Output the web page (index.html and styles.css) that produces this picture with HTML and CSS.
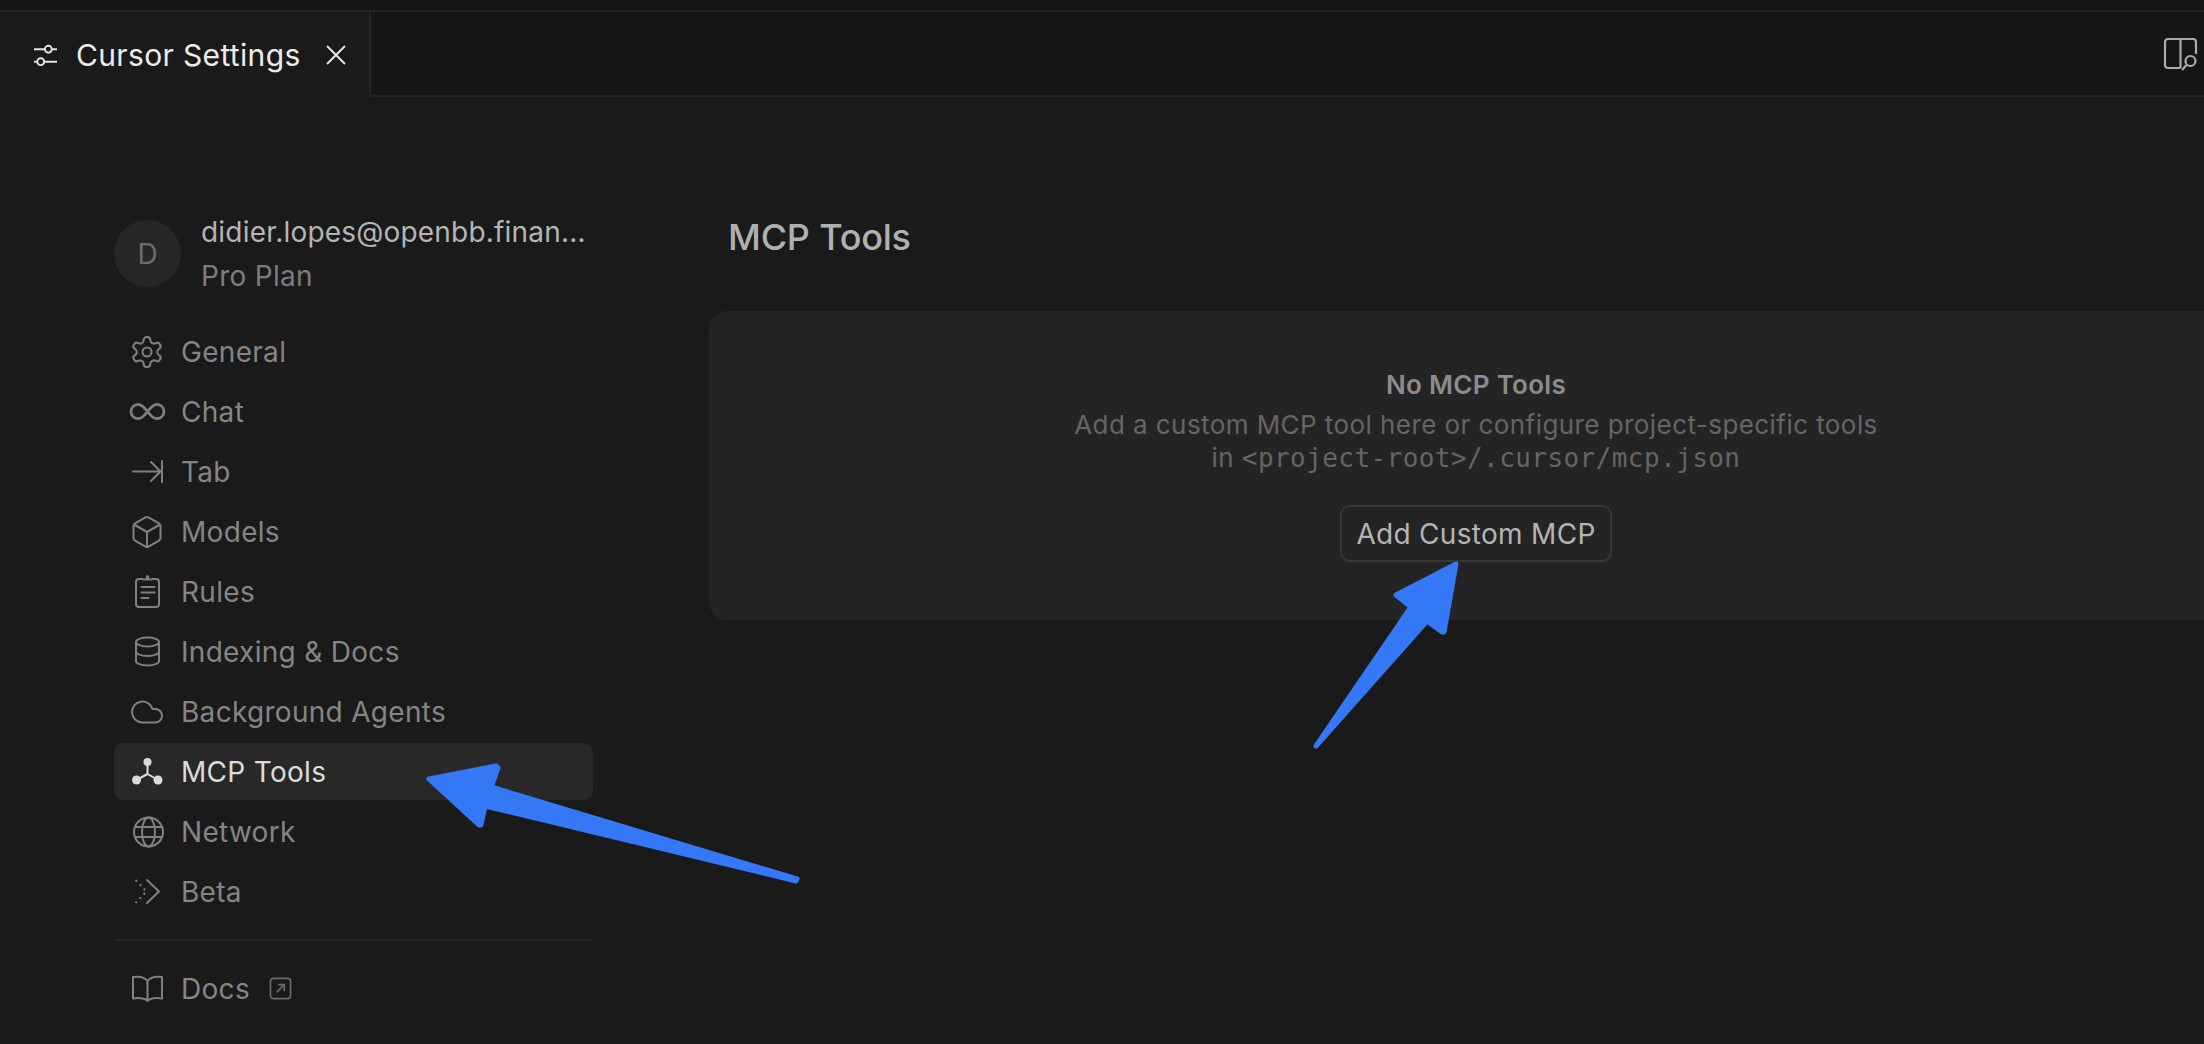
FILE: index.html
```html
<!DOCTYPE html>
<html lang="en">
<head>
<meta charset="utf-8">
<title>Cursor Settings</title>
<link rel="stylesheet" href="styles.css">
</head>
<body>
<div class="app">
  <div class="titlestrip"></div>
  <header class="tabbar">
    <div class="tab">
      <svg class="tab-icon" viewBox="0 0 24 24" width="24" height="24"><path d="M0 6h11M19 6h5M0 19h3M11 19h13"/><circle cx="15" cy="6" r="3.6"/><circle cx="7" cy="19" r="3.6"/></svg>
      <span class="tab-label">Cursor Settings</span>
      <svg class="tab-close" viewBox="0 0 20 20" width="20" height="20"><path d="M1 1l18 18M19 1L1 19"/></svg>
    </div>
    <div class="tab-rest">
      <svg class="layout-icon" viewBox="0 0 32 32" width="32" height="32"><path d="M16.500 30H4a3 3 0 0 1-3-3V4a3 3 0 0 1 3-3h25a3 3 0 0 1 3 3v12M16.500 1v29"/><circle cx="26.500" cy="23" r="5"/><path d="M22.500 27l-4.500 5"/></svg>
    </div>
  </header>
  <div class="body">
    <aside class="sidebar">
      <div class="account">
        <div class="avatar">D</div>
        <div class="account-text">
          <div class="email">didier.lopes@openbb.finan...</div>
          <div class="plan">Pro Plan</div>
        </div>
      </div>
      <nav class="nav">
        <a class="nav-item"><svg class="nav-icon" viewBox="0 0 24 24"><path d="M12.220 2h-.44a2 2 0 0 0-2 2v.18a2 2 0 0 1-1 1.730l-.43.25a2 2 0 0 1-2 0l-.15-.08a2 2 0 0 0-2.730.73l-.22.38a2 2 0 0 0 .73 2.730l.15.1a2 2 0 0 1 1 1.720v.51a2 2 0 0 1-1 1.740l-.15.09a2 2 0 0 0-.73 2.730l.22.38a2 2 0 0 0 2.730.73l.15-.08a2 2 0 0 1 2 0l.43.25a2 2 0 0 1 1 1.730V20a2 2 0 0 0 2 2h.44a2 2 0 0 0 2-2v-.18a2 2 0 0 1 1-1.730l.43-.25a2 2 0 0 1 2 0l.15.08a2 2 0 0 0 2.730-.73l.22-.39a2 2 0 0 0-.73-2.730l-.15-.08a2 2 0 0 1-1-1.740v-.5a2 2 0 0 1 1-1.740l.15-.09a2 2 0 0 0 .73-2.730l-.22-.38a2 2 0 0 0-2.730-.73l-.15.08a2 2 0 0 1-2 0l-.43-.25a2 2 0 0 1-1-1.730V4a2 2 0 0 0-2-2z"/><circle cx="12" cy="12" r="3"/></svg><span>General</span></a>
        <a class="nav-item"><svg class="nav-icon" viewBox="0 0 36 36"><path class="thick" d="M18.500 17.500c-3-4-5.800-7.200-9.300-7.200a7.200 7.200 0 0 0 0 14.400c3.500 0 6.300-3.200 9.300-7.200Zm0 0c3 4 5.800 7.200 9.300 7.200a7.200 7.200 0 0 0 0-14.400c-3.500 0-6.300 3.200-9.300 7.200Z"/></svg><span>Chat</span></a>
        <a class="nav-item"><svg class="nav-icon" viewBox="0 0 36 36"><path class="px" d="M4 17.500H31M22 8l9.500 9.500L22 27M33 7v21"/></svg><span>Tab</span></a>
        <a class="nav-item"><svg class="nav-icon" viewBox="0 0 24 24"><path d="M21 8a2 2 0 0 0-1-1.730l-7-4a2 2 0 0 0-2 0l-7 4A2 2 0 0 0 3 8v8a2 2 0 0 0 1 1.730l7 4a2 2 0 0 0 2 0l7-4A2 2 0 0 0 21 16ZM3.300 7l8.700 5 8.700-5M12 22V12"/></svg><span>Models</span></a>
        <a class="nav-item"><svg class="nav-icon" viewBox="0 0 36 36"><path class="px" d="M14 5h-4a3 3 0 0 0-3 3v22a3 3 0 0 0 3 3h17a3 3 0 0 0 3-3V8a3 3 0 0 0-3-3h-4M12.500 13h13M12.500 18.500h13M12.500 24h7"/><path class="dome" d="M14 6.500c0-1.500 1-2 2.500-2C17 2 17.500 1 18.500 1s1.500 1 2 3.500c1.500 0 3 .5 3 2z"/></svg><span>Rules</span></a>
        <a class="nav-item"><svg class="nav-icon" viewBox="0 0 36 36"><ellipse class="px" cx="18.500" cy="8" rx="11.500" ry="4.500"/><path class="px" d="M7 8v19c0 2.500 5 4.500 11.500 4.500S30 29.500 30 27V8M7 17.500c0 2.500 5 4.500 11.500 4.500S30 20 30 17.500"/></svg><span>Indexing &amp; Docs</span></a>
        <a class="nav-item"><svg class="nav-icon" viewBox="0 0 24 24"><path d="M17.500 19H9a7 7 0 1 1 6.710-9h1.790a4.500 4.500 0 1 1 0 9Z"/></svg><span>Background Agents</span></a>
        <a class="nav-item active"><svg class="nav-icon" viewBox="0 0 36 36"><path class="px" d="M18.500 8v12L7.500 26M18.500 20l10.500 6"/><circle class="node" cx="18.500" cy="8" r="4"/><circle class="node" cx="7.500" cy="26" r="4.500"/><circle class="node" cx="29" cy="26" r="4.500"/></svg><span>MCP Tools</span></a>
        <a class="nav-item"><svg class="nav-icon" viewBox="0 0 36 36"><circle class="px" cx="19.500" cy="18" r="14.500"/><ellipse class="px" cx="19.500" cy="18" rx="6.500" ry="14.500"/><path class="px" d="M6 13h27M6 23h27"/></svg><span>Network</span></a>
        <a class="nav-item"><svg class="nav-icon" viewBox="0 0 36 36"><path class="dots" d="M6.500 6l11 11.500L6.500 29"/><path class="px" d="M18 6l12 11.500L18 29"/></svg><span>Beta</span></a>
      </nav>
      <div class="separator"></div>
      <a class="nav-item docs"><svg class="nav-icon" viewBox="0 0 36 36"><path class="px" d="M18.500 10v20M18.500 10C16 6.500 11 5 4 6v21.500C11 26.500 16 27.500 18.500 30 21 27.500 26 26.500 33 27.500V6c-7-1-12 .5-14.500 4Z"/></svg><span>Docs</span><svg class="ext-icon" viewBox="0 0 24 24" width="23" height="23"><rect x="1.500" y="1.500" width="21" height="21" rx="3"/><path d="M8 16l8-8M9.500 8H16v6.500"/></svg></a>
    </aside>
    <main class="main">
      <h1 class="title">MCP Tools</h1>
      <section class="card">
        <div class="card-title">No MCP Tools</div>
        <p class="card-desc">Add a custom MCP tool here or configure project-specific tools<br>in <code class="path">&lt;project-root&gt;/.cursor/mcp.json</code></p>
        <button class="add-btn">Add Custom MCP</button>
      </section>
    </main>
    <svg class="arrows" viewBox="0 0 2204 947" width="2204" height="947">
      <g transform="translate(0 -97)">
        <polygon points="429,779 496,766 498,768 491,787 797,879 796,881 485,806 481,825 479,825"/>
        <polygon points="1456,564 1396,595 1411,607 1316,746 1427,621 1442,632 1444,632"/>
      </g>
    </svg>
  </div>
</div>
</body>
</html>
```
FILE: styles.css
```css
* { box-sizing: border-box; }
html, body { margin: 0; height: 100%; overflow: hidden; }
body { background: #1a1a1a; font-family: Inter, "Liberation Sans", sans-serif; color: #808080; }

.app { height: 1044px; display: flex; flex-direction: column; overflow: hidden; }

.titlestrip { height: 12px; background: #151515; border-bottom: 2px solid #232323; flex: none; }

.tabbar { height: 85px; display: flex; flex: none; }
.tab { width: 371px; display: flex; align-items: center; background: #1a1a1a; border-right: 2px solid #242424; padding-left: 34px; }
.tab-icon { flex: none; width: 23px; height: 24px; fill: none; stroke: #e6e6e6; stroke-width: 2; }
.tab-label { margin-left: 19px; font-size: 30px; letter-spacing: .35px; color: #ececec; white-space: nowrap; }
.tab-close { flex: none; margin-left: 25px; fill: none; stroke: #e6e6e6; stroke-width: 2; }
.tab-rest { flex: 1; background: #151515; border-bottom: 2px solid #242424; display: flex; justify-content: flex-end; align-items: flex-start; padding: 26px 8px 0 0; }
.layout-icon { fill: none; stroke: #ababab; stroke-width: 2.200; overflow: visible; }

.body { flex: 1; display: flex; position: relative; min-height: 0; }

.sidebar { width: 593px; flex: none; padding: 123px 0 0 114px; }
.account { display: flex; align-items: center; gap: 20px; height: 67px; }
.avatar { width: 67px; height: 67px; border-radius: 50%; background: #262626; color: #6c6c6c; display: flex; align-items: center; justify-content: center; font-size: 28px; flex: none; }
.account-text { display: flex; flex-direction: column; gap: 8px; }
.email { font-size: 28px; letter-spacing: .2px; line-height: 36px; color: #b5b5b5; white-space: nowrap; }
.plan { font-size: 28px; letter-spacing: .3px; line-height: 36px; color: #7d7d7d; }

.nav { margin-top: 36px; display: flex; flex-direction: column; gap: 3px; }
.nav-item { height: 57px; display: flex; align-items: center; padding-left: 15px; border-radius: 9px; font-size: 28px; letter-spacing: .3px; color: #858585; white-space: nowrap; }
.nav-item.active { background: #282828; color: #dcdcdc; }
.nav-icon { width: 36px; height: 36px; flex: none; margin-right: 16px; fill: none; stroke: #808080; stroke-width: 1.350; stroke-linecap: round; stroke-linejoin: round; overflow: visible; }
.nav-icon .thick { stroke-width: 2.700; }
.nav-icon .px { stroke-width: 2; }
.nav-icon .dome { fill: #808080; stroke: none; }
.nav-icon .dots { stroke-width: 2; stroke-dasharray: 2 4; stroke-linecap: butt; }
.nav-item.active .nav-icon { stroke: #dcdcdc; }
.nav-icon .node { fill: #dcdcdc; stroke: none; }

.separator { height: 2px; background: #242424; margin: 19px 0 19px; }
.ext-icon { margin-left: 19px; fill: none; stroke: #6a6a6a; stroke-width: 1.800; }

.main { flex: none; width: 1534px; margin-left: 116px; padding-top: 118px; }
.title { margin: 0; padding-left: 19px; font-size: 36px; letter-spacing: -.2px; line-height: 44px; font-weight: 500; color: #b0b0b0; margin-bottom: 52px; }
.card { height: 309px; border-radius: 18px; background: #242424; padding-top: 57px; display: flex; flex-direction: column; align-items: center; }
.card-title { font-size: 26px; letter-spacing: .3px; line-height: 34px; font-weight: 600; color: #8c8c8c; }
.card-desc { margin: 6px 0 0; font-size: 26px; letter-spacing: .43px; line-height: 33px; color: #656565; text-align: center; }
.path { font-family: "DejaVu Sans Mono", monospace; font-size: 26px; line-height: 1; }
.add-btn { margin-top: 31px; height: 57px; width: 272px; padding: 0; border: 2px solid #383838; border-radius: 10px; background: #242424; font-family: inherit; font-size: 28px; letter-spacing: .3px; color: #b4b4b4; }

.arrows { position: absolute; left: 0; top: 0; pointer-events: none; }
.arrows polygon { fill: #3478f6; stroke: #3478f6; stroke-width: 5; stroke-linejoin: round; }
```
